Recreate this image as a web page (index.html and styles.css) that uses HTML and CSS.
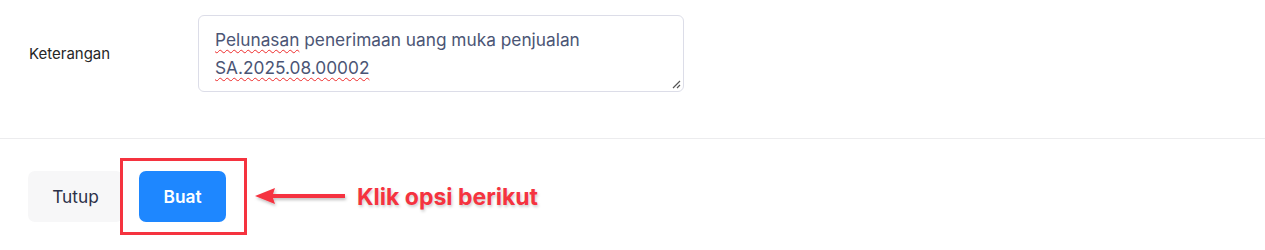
FILE: index.html
```html
<!DOCTYPE html>
<html lang="id">
<head>
    <meta charset="UTF-8">
    <meta name="viewport" content="width=device-width, initial-scale=1.0">
    <title>Pelunasan</title>
    <link rel="stylesheet" href="styles.css">
</head>
<body>

    <!-- Form -->
    <div class="form-body">
        <div class="form-row">
            <label class="form-label">Keterangan</label>
            <div class="fake-textarea">
                <span class="typo">Pelunasan</span> penerimaan uang muka penjualan<br>
                <span class="typo">SA.2025.08.00002</span>
                <svg class="grip" width="9" height="9" viewBox="0 0 9 9">
                    <path d="M1 8 L8 1 M5 8 L8 5" stroke="#555" stroke-width="1.2" fill="none"/>
                </svg>
            </div>
        </div>
    </div>

    <!-- Footer tombol -->
    <div class="form-footer">
        <button class="btn btn-light">Tutup</button>
        <span class="highlight">
            <button class="btn btn-primary">Buat</button>
        </span>
        <svg class="arrow" width="96" height="28" viewBox="0 0 96 28">
            <defs>
                <filter id="shadow" x="-20%" y="-50%" width="140%" height="200%">
                    <feDropShadow dx="1" dy="2" stdDeviation="1.5" flood-color="#000" flood-opacity="0.25"/>
                </filter>
            </defs>
            <g filter="url(#shadow)">
                <path d="M2 13 L22 5 L20 11 L92 11 L92 15 L20 15 L22 21 Z" fill="#f5333f"/>
            </g>
        </svg>
        <span class="note">Klik opsi berikut</span>
    </div>

</body>
</html>
```

FILE: styles.css
```css
/* Umum */
body {
    margin: 0;
    background-color: #fff;
    font-family: 'Inter', 'Noto Sans', sans-serif;
    color: #222;
}

/* Form */
.form-body {
    padding: 15px 0 46px 29px;
    border-bottom: 1px solid #ececee;
}

.form-row {
    display: flex;
    align-items: center;
}

.form-label {
    width: 169px;
    font-size: 15px;
    color: #262626;
}

.fake-textarea {
    position: relative;
    box-sizing: border-box;
    width: 486px;
    height: 77px;
    padding: 10px 16px;
    border: 1px solid #dcdde8;
    border-radius: 6px;
    font-size: 17.3px;
    line-height: 27.5px;
    color: #4b5575;
}

.typo {
    text-decoration: underline wavy #ee2b2b;
    text-decoration-thickness: 1px;
    text-underline-offset: 3px;
}

.fake-textarea .grip {
    position: absolute;
    right: 2px;
    bottom: 2px;
}

/* Footer */
.form-footer {
    display: flex;
    align-items: center;
    padding: 32px 0 27px 28px;
}

.btn {
    height: 51px;
    padding: 0;
    border: none;
    border-radius: 7px;
    font-family: 'Inter', 'Noto Sans', sans-serif;
    font-size: 17.3px;
    cursor: pointer;
}

.btn-light {
    width: 95px;
    background-color: #f7f7f8;
    color: #2b3048;
    margin-right: 16px;
}

.btn-primary {
    width: 87px;
    background-color: #1e87ff;
    color: #fff;
    font-weight: 600;
}

.highlight {
    position: relative;
    display: flex;
}

.highlight::after {
    content: "";
    position: absolute;
    top: -13px;
    bottom: -13px;
    left: -19px;
    right: -21px;
    border: 3px solid #f5333f;
}

.arrow {
    margin-left: 27px;
}

.note {
    margin-left: 8px;
    font-size: 23px;
    font-weight: 700;
    color: #f5333f;
    text-shadow: 1px 2px 3px rgba(0, 0, 0, 0.2);
}
```
